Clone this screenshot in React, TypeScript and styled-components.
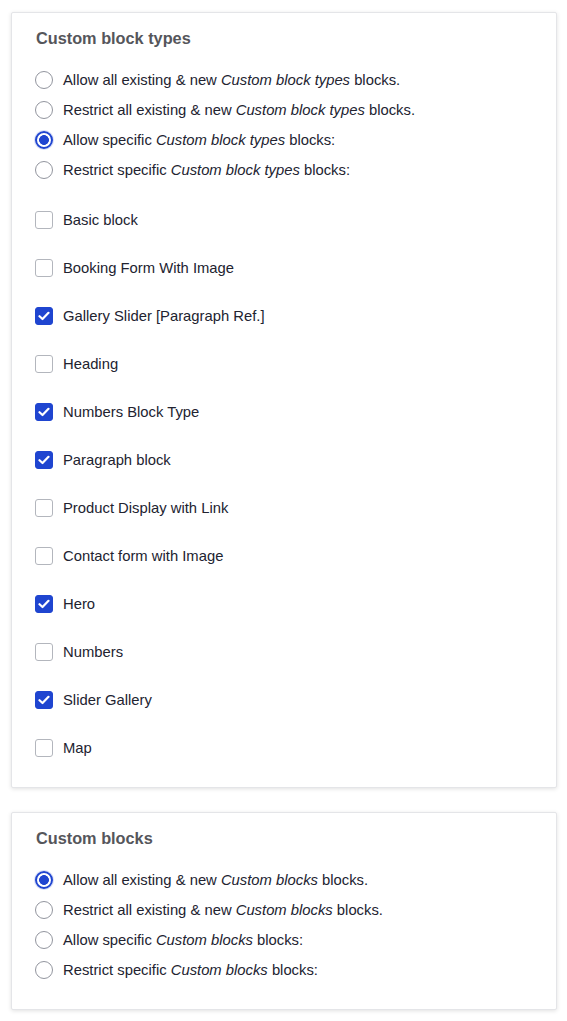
import styled, { createGlobalStyle } from "styled-components";

const GlobalStyle = createGlobalStyle`
    html, body {
        margin: 0;
        padding: 0;
        background: #ffffff;
    }
    body {
        font-family: "Liberation Sans", Arial, sans-serif;
        color: #222330;
    }
`

const Page = styled.div`
    display: flex;
    flex-direction: column;
    gap: 24px;
    padding: 12px 10px 12px 11px;
`

const Card = styled.section`
    border: 1px solid #e4e5e8;
    border-radius: 2px;
    box-shadow: 0 1px 4px rgba(0, 0, 0, 0.12);
    background: #fff;
    padding: 15px 23px 24px 23px;
`

const Heading = styled.h3`
    margin: 0 0 17px 1px;
    font-size: 16.3px;
    line-height: 20px;
    font-weight: 700;
    color: #55565b;
`

const OptionList = styled.div`
    display: flex;
    flex-direction: column;
`

const CheckList = styled.div`
    display: flex;
    flex-direction: column;
    gap: 18px;
    margin-top: 20px;
`

const Row = styled.label`
    display: flex;
    align-items: center;
    gap: 10px;
    height: 30px;
    font-size: 14.8px;
    line-height: 20px;
    cursor: pointer;
    user-select: none;

    em {
        font-style: italic;
    }
`

const RadioMark = styled.span<{ $checked: boolean }>`
    box-sizing: border-box;
    flex: none;
    width: 18px;
    height: 18px;
    border-radius: 50%;
    border: ${p => p.$checked ? '2px solid #1f45d0' : '1px solid #92959e'};
    background: ${p => p.$checked ? 'radial-gradient(circle, #1f45d0 0 4.6px, #fff 5.2px)' : '#fff'};
    box-shadow: ${p => p.$checked ? '0 0 0 1px rgba(31, 69, 208, 0.18)' : 'none'};
`

const CheckMark = styled.span<{ $checked: boolean }>`
    box-sizing: border-box;
    flex: none;
    display: flex;
    align-items: center;
    justify-content: center;
    width: 18px;
    height: 18px;
    border-radius: 3px;
    border: 1px solid ${p => p.$checked ? '#1f45d0' : '#b3b6bd'};
    background: ${p => p.$checked ? '#1f45d0' : '#fff'};
`

type Radio = { pre: string, name: string, post: string, checked?: boolean }

const radiosFor = (name: string, selected: number): Radio[] => [
    { pre: 'Allow all existing & new ', name, post: ' blocks.' },
    { pre: 'Restrict all existing & new ', name, post: ' blocks.' },
    { pre: 'Allow specific ', name, post: ' blocks:' },
    { pre: 'Restrict specific ', name, post: ' blocks:' },
].map((r, i) => ({ ...r, checked: i === selected }))

const blockTypes: { label: string, checked: boolean }[] = [
    { label: 'Basic block', checked: false },
    { label: 'Booking Form With Image', checked: false },
    { label: 'Gallery Slider [Paragraph Ref.]', checked: true },
    { label: 'Heading', checked: false },
    { label: 'Numbers Block Type', checked: true },
    { label: 'Paragraph block', checked: true },
    { label: 'Product Display with Link', checked: false },
    { label: 'Contact form with Image', checked: false },
    { label: 'Hero', checked: true },
    { label: 'Numbers', checked: false },
    { label: 'Slider Gallery', checked: true },
    { label: 'Map', checked: false },
]

function Tick() {
    return (
        <svg width="12" height="10" viewBox="0 0 12 10" fill="none">
            <path d="M1.5 5.2 L4.5 8 L10.5 1.8" stroke="#fff" strokeWidth="2.2" strokeLinecap="round" strokeLinejoin="round" />
        </svg>
    )
}

function RadioGroup({ items }: { items: Radio[] }) {
    return (
        <OptionList>
            {items.map((r, i) => (
                <Row key={i}>
                    <RadioMark $checked={!!r.checked} />
                    <span>{r.pre}<em>{r.name}</em>{r.post}</span>
                </Row>
            ))}
        </OptionList>
    )
}

export default function App() {
    return (
        <>
            <GlobalStyle />
            <Page>
                <Card>
                    <Heading>Custom block types</Heading>
                    <RadioGroup items={radiosFor('Custom block types', 2)} />
                    <CheckList>
                        {blockTypes.map((b, i) => (
                            <Row key={i}>
                                <CheckMark $checked={b.checked}>{b.checked && <Tick />}</CheckMark>
                                <span>{b.label}</span>
                            </Row>
                        ))}
                    </CheckList>
                </Card>
                <Card>
                    <Heading>Custom blocks</Heading>
                    <RadioGroup items={radiosFor('Custom blocks', 0)} />
                </Card>
            </Page>
        </>
    )
}
